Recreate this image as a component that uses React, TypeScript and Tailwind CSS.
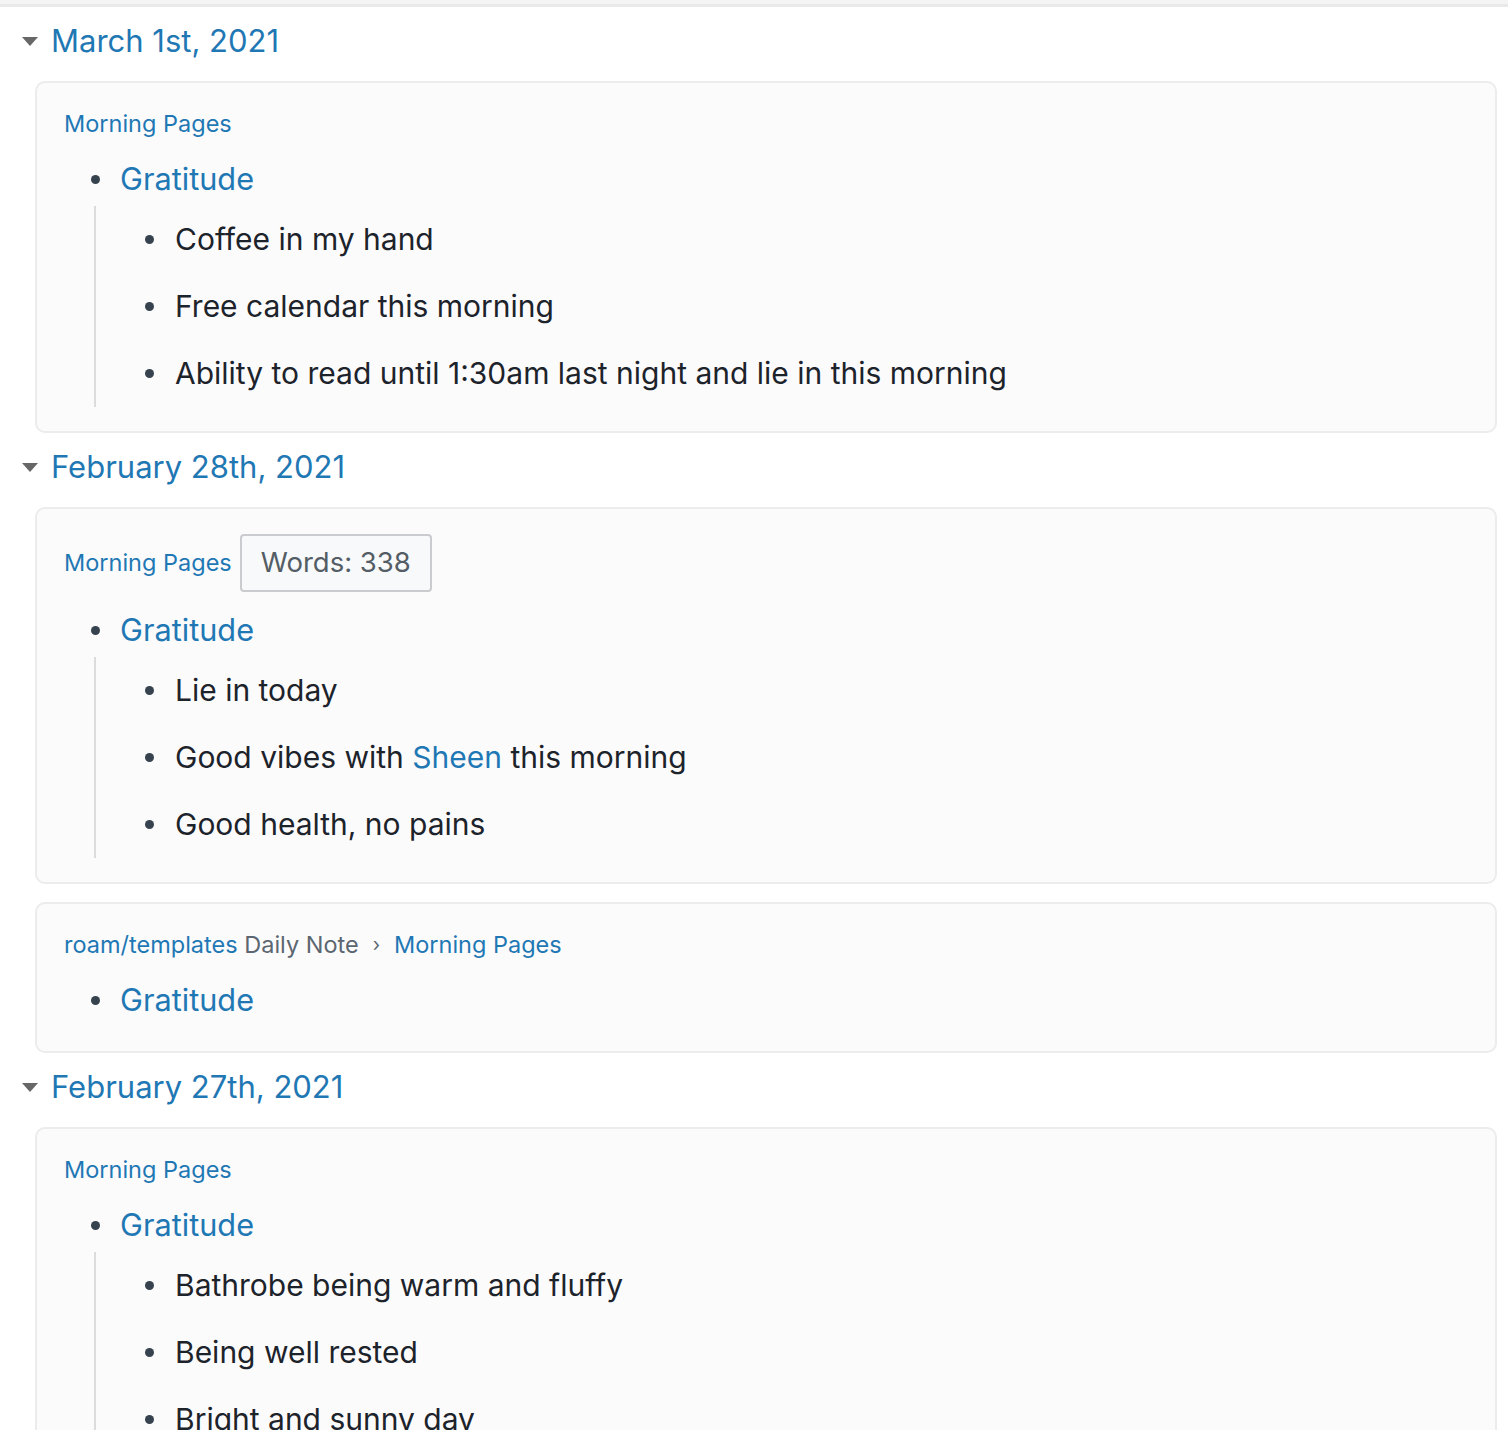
import React from "react";

type Child = { parts: { text: string; link?: boolean }[] };

type Block = {
  crumbs: { text: string; link?: boolean; sep?: boolean }[];
  words?: number;
  children: Child[];
};

type Day = { title: string; blocks: Block[] };

const link = "text-[#1f78b4]";

const days: Day[] = [
  {
    title: "March 1st, 2021",
    blocks: [
      {
        crumbs: [{ text: "Morning Pages", link: true }],
        children: [
          { parts: [{ text: "Coffee in my hand" }] },
          { parts: [{ text: "Free calendar this morning" }] },
          { parts: [{ text: "Ability to read until 1:30am last night and lie in this morning" }] },
        ],
      },
    ],
  },
  {
    title: "February 28th, 2021",
    blocks: [
      {
        crumbs: [{ text: "Morning Pages", link: true }],
        words: 338,
        children: [
          { parts: [{ text: "Lie in today" }] },
          {
            parts: [
              { text: "Good vibes with " },
              { text: "Sheen", link: true },
              { text: " this morning" },
            ],
          },
          { parts: [{ text: "Good health, no pains" }] },
        ],
      },
      {
        crumbs: [
          { text: "roam/templates", link: true },
          { text: " Daily Note" },
          { text: "›", sep: true },
          { text: "Morning Pages", link: true },
        ],
        children: [],
      },
    ],
  },
  {
    title: "February 27th, 2021",
    blocks: [
      {
        crumbs: [{ text: "Morning Pages", link: true }],
        children: [
          { parts: [{ text: "Bathrobe being warm and fluffy" }] },
          { parts: [{ text: "Being well rested" }] },
          { parts: [{ text: "Bright and sunny day" }] },
        ],
      },
    ],
  },
];

const Bullet = () => <span className="block w-[9px] h-[9px] rounded-full bg-[#36434f] shrink-0" />;

const Card = ({ block }: { block: Block }) => (
  <div
    className={`ml-[35px] mr-[11px] border-2 border-[#ececec] rounded-[10px] bg-[#fbfbfc] pl-[27px] pt-[25px] ${
      block.children.length ? "pb-[24px]" : "pb-[26px]"
    }`}
  >
    {/* breadcrumb row */}
    <div className={`flex items-center ${block.words ? "h-[58px]" : "h-[30px] mt-[1px]"} text-[23.5px]`}>
      {block.crumbs.map((c, i) =>
        c.sep ? (
          <span key={i} className="mx-[14px] text-[#5c6670] text-[19px]">
            {c.text}
          </span>
        ) : (
          <span key={i} className={c.link ? link : "text-[#5c6670] whitespace-pre"}>
            {c.text}
          </span>
        )
      )}
      {block.words && (
        <span className="ml-[8px] h-[58px] px-[19px] flex items-center border-2 border-[#c9cbce] rounded-[4px] bg-[#f8f9fa] text-[#545d66] text-[27.5px]">
          Words: {block.words}
        </span>
      )}
    </div>

    {/* parent block */}
    <div className={`flex items-center h-[50px] ${block.words ? "mt-[13px]" : "mt-[15px]"} pl-[27px] gap-[20px]`}>
      <Bullet />
      <span className={`${link} text-[30.7px]`}>Gratitude</span>
    </div>

    {block.children.length > 0 && (
      <div className="ml-[30px] mt-[2px] border-l-2 border-[#dcdcdc]">
        {block.children.map((ch, i) => (
          <div key={i} className="flex items-center h-[67px] pl-[49px] gap-[21px] text-[30px] text-[#1d232b]">
            <Bullet />
            <span>
              {ch.parts.map((p, j) => (
                <span key={j} className={p.link ? link : ""}>
                  {p.text}
                </span>
              ))}
            </span>
          </div>
        ))}
      </div>
    )}
  </div>
);

export default function App() {
  return (
    <div
      className="w-[1508px] h-[1430px] overflow-hidden bg-white"
      style={{ fontFamily: "Inter, 'Noto Sans', sans-serif" }}
    >
      <div className="h-[7px] bg-[#f4f4f4] border-b-[3px] border-[#e9e9e9]" />
      {days.map((d, i) => (
        <div key={i}>
          <div className="flex items-center h-[48px] mt-[10px] mb-[16px]">
            <svg width="16" height="9" viewBox="0 0 16 9" className="ml-[22px] mr-[13px]">
              <path d="M0 0 L16 0 L8 9 Z" fill="#676767" />
            </svg>
            <span className={`${link} text-[31px]`}>{d.title}</span>
          </div>
          <div className="flex flex-col gap-[18px]">
            {d.blocks.map((b, j) => (
              <Card key={j} block={b} />
            ))}
          </div>
        </div>
      ))}
    </div>
  );
}
